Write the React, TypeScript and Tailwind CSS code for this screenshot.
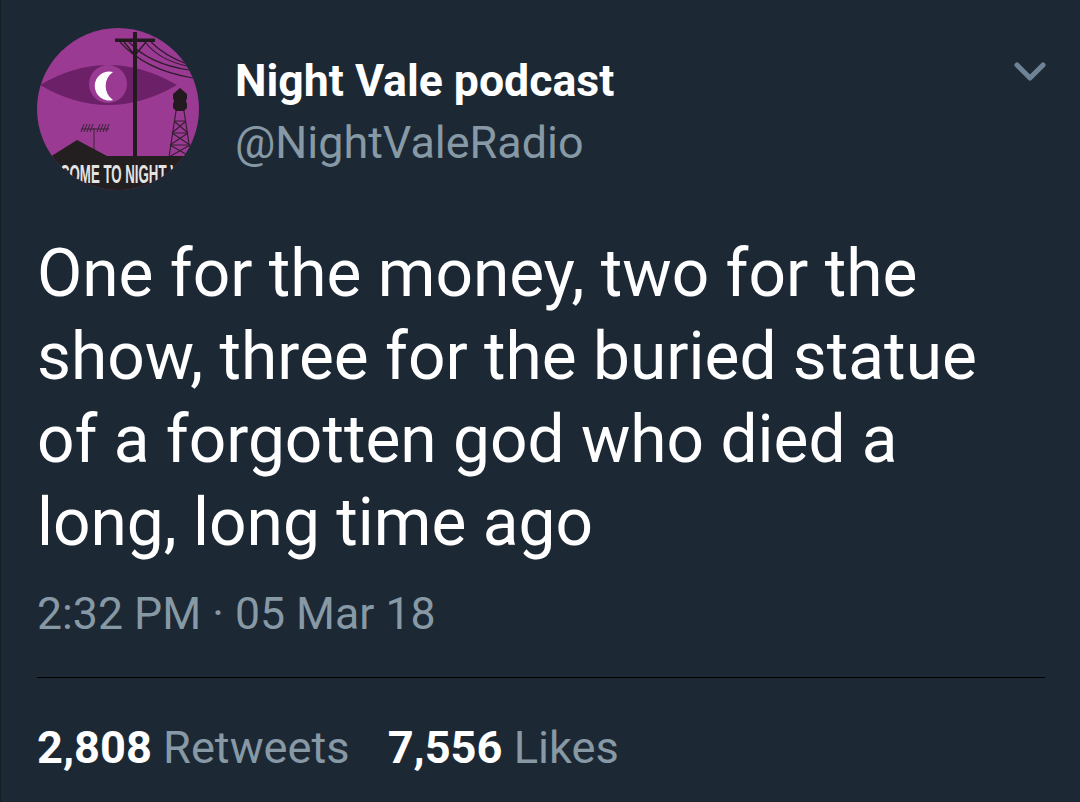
const Avatar = () => (
  <svg viewBox="0 0 162 162" className="w-[162px] h-[162px] shrink-0">
    <defs>
      <clipPath id="avatar-clip">
        <circle cx="81" cy="81" r="81" />
      </clipPath>
    </defs>
    <g clipPath="url(#avatar-clip)">
      <rect width="162" height="162" fill="#9b3a93" />
      {/* eye */}
      <path d="M3 57 Q71 17 140 57 Q71 97 3 57Z" fill="#6b2068" />
      <circle cx="71" cy="56" r="19" fill="#9b3a93" />
      <path d="M76 44 A14.5 14.5 0 1 0 76 72 A17 17 0 0 1 76 44Z" fill="#ffffff" />
      {/* wires */}
      <g fill="none" stroke="#2f1d2e" strokeWidth="1.2">
        <path d="M83 14 Q108 42 156 50" />
        <path d="M92 14 Q112 36 152 42" />
        <path d="M108 14 Q122 32 150 38" />
        <path d="M114 14 Q128 28 150 36" />
      </g>
      {/* pole */}
      <rect x="96" y="4" width="4" height="126" fill="#231a20" />
      <rect x="78" y="10.5" width="40" height="3.5" fill="#231a20" />
      <path d="M87 14 L97 26 M109 14 L99 26" stroke="#231a20" strokeWidth="1.2" />
      {/* water tower */}
      <path d="M143 60 L150 66 V70 L149 73 L150 76 V80 L147 83 H139 L136 80 V76 L137 73 L136 70 V66Z" fill="#231a20" />
      <g fill="none" stroke="#352033" strokeWidth="1.2">
        <path d="M139 83 L132 129 M147 83 L154 129" />
        <path d="M137 93 H149 M135 105 H151 M133 117 H153" />
        <path d="M137 93 L151 105 M149 93 L135 105 M135 105 L153 117 M151 105 L133 117 M133 117 L154 129 M153 117 L132 129" />
      </g>
      {/* antenna */}
      <g fill="none" stroke="#3a2238" strokeWidth="1">
        <path d="M57 100 V130" />
        <path d="M44 101 H72" />
        <path d="M44 104 L47 96 M47 104 L50 96 M50 104 L53 96 M53 104 L56 96 M60 104 L63 96 M63 104 L66 96 M66 104 L69 96 M69 104 L72 96" />
      </g>
      {/* rooftop and band */}
      <path d="M13 129 L40 112 L70 128 H162 V162 H0 V129Z" fill="#231f20" />
      <text x="23" y="155" fontFamily="'Liberation Sans', sans-serif" fontWeight="700" fontSize="25" fill="#e4e4e4" textLength="119" lengthAdjust="spacingAndGlyphs">
        COME TO NIGHT V
      </text>
    </g>
  </svg>
);

export default function App() {
  return (
    <div className="w-[1080px] h-[802px] overflow-hidden bg-[#1c2935] border-l border-[#141c24] font-['Roboto',sans-serif]">
      <div className="pl-[36px] pr-[35px]">
        <div className="flex pt-[28px]">
          <Avatar />
          <div className="pl-[36px] pt-[26px] flex-1">
            <div className="text-[44.6px] leading-[54px] font-bold text-white">Night Vale podcast</div>
            <div className="text-[44.9px] leading-[54px] mt-[8px] text-[#8899a6]">@NightValeRadio</div>
          </div>
          <svg viewBox="0 0 32 20" className="w-[32px] h-[20px] mt-[34px] mr-[-1px]" fill="none" stroke="#6f8397" strokeWidth="5" strokeLinecap="round" strokeLinejoin="round">
            <path d="M3 3 L16 16 L29 3" />
          </svg>
        </div>
        <p className="mt-[42px] text-[65.8px] leading-[83px] text-white w-[960px]">
          One for the money, two for the show, three for the buried statue of a forgotten god who died a long, long time ago
        </p>
        <div className="mt-[22px] text-[44.6px] leading-[56px] text-[#8899a6]">2:32 PM · 05 Mar 18</div>
        <div className="mt-[35px] h-px w-[1008px] bg-black" />
        <div className="mt-[42px] flex text-[45.2px] leading-[56px] text-[#8899a6]">
          <span><span className="font-bold text-white">2,808</span> Retweets</span>
          <span className="ml-[38px]"><span className="font-bold text-white">7,556</span> Likes</span>
        </div>
      </div>
    </div>
  );
}
